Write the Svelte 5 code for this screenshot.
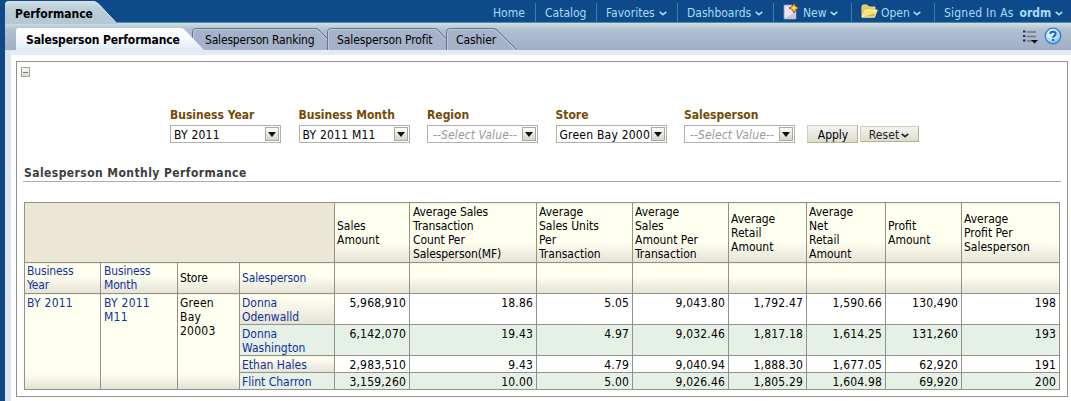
<script lang="ts">
  interface NavItem {
    label: string;
    icon?: "new" | "open";
    user?: string;
    menu?: boolean;
  }

  const navItems: NavItem[] = [
    { label: "Home" },
    { label: "Catalog" },
    { label: "Favorites", menu: true },
    { label: "Dashboards", menu: true },
    { label: "New", icon: "new", menu: true },
    { label: "Open", icon: "open", menu: true },
    { label: "Signed In As", user: "ordm", menu: true },
  ];

  const filters = [
    { label: "Business Year", value: "BY 2011" },
    { label: "Business Month", value: "BY 2011 M11" },
    { label: "Region", value: "" },
    { label: "Store", value: "Green Bay 2000" },
    { label: "Salesperson", value: "" },
  ];

  const measures = [
    ["Sales", "Amount"],
    ["Average Sales", "Transaction", "Count Per", "Salesperson(MF)"],
    ["Average", "Sales Units", "Per", "Transaction"],
    ["Average", "Sales", "Amount Per", "Transaction"],
    ["Average", "Retail", "Amount"],
    ["Average", "Net", "Retail", "Amount"],
    ["Profit", "Amount"],
    ["Average", "Profit Per", "Salesperson"],
  ];

  const rows = [
    {
      name: ["Donna", "Odenwalld"],
      values: ["5,968,910", "18.86", "5.05", "9,043.80", "1,792.47", "1,590.66", "130,490", "198"],
    },
    {
      name: ["Donna", "Washington"],
      values: ["6,142,070", "19.43", "4.97", "9,032.46", "1,817.18", "1,614.25", "131,260", "193"],
    },
    {
      name: ["Ethan Hales"],
      values: ["2,983,510", "9.43", "4.79", "9,040.94", "1,888.30", "1,677.05", "62,920", "191"],
    },
    {
      name: ["Flint Charron"],
      values: ["3,159,260", "10.00", "5.00", "9,026.46", "1,805.29", "1,604.98", "69,920", "200"],
    },
  ];
</script>

{#snippet chevron()}
  <svg class="chevron" width="8" height="5" viewBox="0 0 8 5" fill="none" stroke="currentColor" stroke-width="1.6">
    <path d="M0.7 0.8 L4 3.6 L7.3 0.8" />
  </svg>
{/snippet}

{#snippet lines(parts: string[])}
  {#each parts as part, i}{#if i > 0}<br />{/if}{part}{/each}
{/snippet}

<div class="app">
  <header class="topbar">
    <div class="page-tab">
      <svg class="shape" width="113" height="24" viewBox="0 0 113 24">
        <defs>
          <linearGradient id="page-fill" x1="0" y1="0" x2="0" y2="1">
            <stop offset="0" stop-color="#d2e0e5" />
            <stop offset="0.35" stop-color="#bacfd9" />
            <stop offset="1" stop-color="#b3c7d4" />
          </linearGradient>
        </defs>
        <path d="M0 24 V5 Q0 1 4 1 H88 Q91 1 94 4 L111 22.5 L113 24 Z" fill="url(#page-fill)" />
        <path d="M0.5 5 Q0.5 1.5 4 1.5 H88 Q91 1.5 94 4.5 L111 22.5" fill="none" stroke="#d9e7ec" />
      </svg>
      <span>Performance</span>
    </div>
    <nav>
      {#each navItems as item}
        <a href="#top" class:with-icon={item.icon}>
          {#if item.icon === "new"}
            <svg class="icon" width="17" height="17" viewBox="0 0 17 17">
              <path d="M1 2 H9 L13 6 V16 H1 Z" fill="#e9e6f2" stroke="#8f8cae" stroke-width="0.8" />
              <path d="M1.5 15.5 L12.5 15.5 V9 Z" fill="#cbc6df" />
              <path d="M11 0 L12.6 3.4 L16 5 L12.6 6.6 L11 10 L9.4 6.6 L6 5 L9.4 3.4 Z" fill="#ffbd23" stroke="#94400f" stroke-width="0.9" />
              <path d="M11 2.6 V7.4 M8.6 5 H13.4" stroke="#fff069" />
            </svg>
          {:else if item.icon === "open"}
            <svg class="icon" width="17" height="15" viewBox="0 0 17 15">
              <path d="M1 13 V2 L2 1 H6 L8 3 H14 V6" fill="#e0ca55" stroke="#f1e8a0" stroke-width="0.9" />
              <path d="M1 13.3 L4.5 6 H16.3 L13.5 13.3 Z" fill="#f3e27b" stroke="#fff7c7" stroke-width="0.8" />
              <path d="M3 12.5 L13 12.5 L14 9.5 Z" fill="#d5b740" />
            </svg>
          {/if}
          <span class:signed={item.user}>{item.label}</span>
          {#if item.user}<b>{item.user}</b>{/if}
          {#if item.menu}{@render chevron()}{/if}
        </a>
      {/each}
    </nav>
  </header>

  <div class="tabbar">
    <div class="tab active">
      <svg class="shape" width="190" height="22" viewBox="0 0 190 22">
        <defs>
          <linearGradient id="active-fill" x1="0" y1="0" x2="0" y2="1">
            <stop offset="0" stop-color="#ffffff" />
            <stop offset="0.45" stop-color="#f7fafe" />
            <stop offset="1" stop-color="#e2ebf6" />
          </linearGradient>
        </defs>
        <path d="M0 22 V3 Q0 0 3 0 H164 Q167 0 169 2 L188 22 Z" fill="url(#active-fill)" />
      </svg>
      <span>Salesperson Performance</span>
    </div>
    <div class="tab ranking">
      <svg class="shape" width="136" height="22" viewBox="0 0 136 22">
        <path class="tab-fill" d="M0 22 V3 Q0 0.5 3 0.5 H125 L136 11 V22 Z" />
        <path class="tab-line" d="M0.5 11 V4 Q0.5 0.5 4 0.5 H124 Q126 0.5 127 2 L136 11" />
        <path class="tab-glow" d="M1.5 12 V4 Q1.5 1.5 4 1.5 H124 L135 12" />
      </svg>
      <span>Salesperson Ranking</span>
    </div>
    <div class="tab profit">
      <svg class="shape" width="120" height="22" viewBox="0 0 120 22">
        <path class="tab-fill" d="M0 22 V3 Q0 0.5 3 0.5 H109 L119 11 V22 Z" />
        <path class="tab-line" d="M0.5 22 V4 Q0.5 0.5 4 0.5 H108 Q110 0.5 111 2 L119.5 11" />
        <path class="tab-glow" d="M1.5 22 V4 Q1.5 1.5 4 1.5 H108 L118.5 12" />
      </svg>
      <span>Salesperson Profit</span>
    </div>
    <div class="tab">
      <svg class="shape" width="72" height="22" viewBox="0 0 72 22">
        <path class="tab-fill" d="M0 22 V3 Q0 0.5 3 0.5 H49 L71 22 Z" />
        <path class="tab-line" d="M0.5 22 V4 Q0.5 0.5 4 0.5 H47 Q49 0.5 51 2 L70.5 21.5" />
        <path class="tab-glow" d="M1.5 22 V4 Q1.5 1.5 4 1.5 H48 L69 22" />
      </svg>
      <span>Cashier</span>
    </div>
    <div class="tools">
      <svg width="15" height="14" viewBox="0 0 15 14">
        <path d="M4 2 H13 M4 6.5 H13 M4 11 H9" stroke="#777577" stroke-width="1.5" />
        <path d="M0 1.5 H2.5 M0 6 H2.5 M0 10.5 H2.5" stroke="#2f2b57" stroke-width="2" />
        <path d="M8 10 H15 L11.5 13.5 Z" fill="#000" />
      </svg>
      <svg width="18" height="18" viewBox="0 0 18 18">
        <defs>
          <radialGradient id="help-fill" cx="0.4" cy="0.3" r="0.75">
            <stop offset="0" stop-color="#f2fbff" />
            <stop offset="0.6" stop-color="#b3ddfa" />
            <stop offset="1" stop-color="#62aee9" />
          </radialGradient>
        </defs>
        <circle cx="9" cy="9" r="7.8" fill="url(#help-fill)" stroke="#2f80d0" stroke-width="1.3" />
        <path d="M6.3 7 Q6.3 4.7 9 4.7 Q11.7 4.7 11.7 6.8 Q11.7 8.1 10.2 8.9 Q9.1 9.5 9.1 10.8" fill="none" stroke="#1766bd" stroke-width="2" />
        <rect x="8" y="12" width="2.2" height="2" fill="#1766bd" />
      </svg>
    </div>
  </div>

  <main>
    <section class="panel">
      <button class="collapse" aria-label="Collapse"></button>

      <form class="prompts">
        {#each filters as filter}
          <div class="field">
            <span class="label">{filter.label}</span>
            <div class="select">
              <span class="value" class:empty={!filter.value}>{filter.value || "--Select Value--"}</span>
              <span class="arrow"></span>
            </div>
          </div>
        {/each}
        <button type="button" class="btn apply">Apply</button>
        <button type="button" class="btn reset">Reset {@render chevron()}</button>
      </form>

      <h2>Salesperson Monthly Performance</h2>

      <table>
        <colgroup>
          <col class="c-year" /><col class="c-month" /><col class="c-store" /><col class="c-person" />
          <col class="c-sales" /><col class="c-count" /><col class="c-units" /><col class="c-amount" />
          <col class="c-retail" /><col class="c-net" /><col class="c-profit" /><col class="c-avg" />
        </colgroup>
        <thead>
          <tr class="measures">
            <th class="corner" colspan="4"></th>
            {#each measures as measure}
              <th>{@render lines(measure)}</th>
            {/each}
          </tr>
          <tr class="dimensions">
            <th class="link">Business<br />Year</th>
            <th class="link">Business<br />Month</th>
            <th>Store</th>
            <th class="link">Salesperson</th>
            {#each measures as _}<th></th>{/each}
          </tr>
        </thead>
        <tbody>
          {#each rows as row, i}
            <tr class:tall={row.name.length > 1} class:alt={i % 2 === 1}>
              {#if i === 0}
                <td class="group link" rowspan={rows.length}>BY 2011</td>
                <td class="group link" rowspan={rows.length}>BY 2011<br />M11</td>
                <td class="group" rowspan={rows.length}>Green<br />Bay<br />20003</td>
              {/if}
              <td class="person link">{@render lines(row.name)}</td>
              {#each row.values as value}
                <td class="num">{value}</td>
              {/each}
            </tr>
          {/each}
        </tbody>
      </table>
    </section>
  </main>
</div>

<style>
  :global(body) {
    background: #0e4a89;
    overflow: hidden;
  }

  .app {
    display: flex;
    flex-direction: column;
    box-sizing: border-box;
    height: 401px;
    padding-left: 5px;
    background: #0e4a89;
    font-family: "DejaVu Sans Condensed", "DejaVu Sans", sans-serif;
    font-stretch: condensed;
    font-size: 12px;
    line-height: 14px;
    color: #000;
  }

  .topbar {
    display: flex;
    justify-content: space-between;
    height: 23px;
    background: linear-gradient(#0e4a89 21px, #105a80 22px, #4b8ca5 22px);
  }

  .shape {
    position: absolute;
    top: 0;
    left: 0;
  }

  .page-tab {
    position: relative;
    width: 113px;
    font-weight: bold;
  }

  .page-tab span {
    position: relative;
    display: block;
    padding: 7px 0 0 10px;
  }

  nav {
    display: grid;
    grid-template-columns: 52px 61px 81px 96px 78px 83px 137px;
    height: 20px;
    margin-top: 3px;
  }

  nav a {
    display: flex;
    align-items: center;
    gap: 4px;
    height: 19px;
    padding-left: 9px;
    border-left: 1px solid #3e80a5;
    color: #a9dcf7;
    text-decoration: none;
    white-space: nowrap;
  }

  nav a:first-child {
    border-left-color: transparent;
  }

  nav b {
    margin-left: 2px;
  }

  .signed {
    letter-spacing: 0.22px;
  }

  .icon {
    margin-top: -2px;
  }

  .with-icon {
    gap: 3px;
  }

  .chevron {
    flex: none;
    margin-top: 2px;
  }

  .tabbar {
    display: flex;
    height: 22px;
    padding: 5px 0 0 11px;
    background: linear-gradient(#d2dfe6 0, #bccbd8 4px, #afbfd0 7px, #a2afc5 26px, #99a8bd 27px);
  }

  .tab {
    position: relative;
    width: 120px;
  }

  .tab span {
    position: relative;
    display: block;
    padding: 5px 0 0 10px;
    white-space: nowrap;
    letter-spacing: -0.1px;
  }

  .active {
    z-index: 1;
    width: 176px;
    font-weight: bold;
  }

  .ranking {
    width: 135px;
  }

  .ranking span {
    padding-left: 13px;
    letter-spacing: -0.18px;
  }

  .profit {
    width: 119px;
  }

  .tab-fill {
    fill: #a5b2c8;
  }

  .tab-line {
    fill: none;
    stroke: #66758f;
  }

  .tab-glow {
    fill: none;
    stroke: #becadb;
  }

  .tools {
    display: flex;
    gap: 6px;
    margin: -1px 9px 0 auto;
  }

  .tools svg:first-child {
    margin-top: 3px;
  }

  main {
    flex: 1;
    padding: 5px 0 0 6px;
    background: linear-gradient(90deg, #dce7f4 6px, transparent 6px), linear-gradient(#e3ebf6 5px, #fff 5px);
  }

  .panel {
    box-sizing: border-box;
    width: 1052px;
    height: 336px;
    margin: 6px 0 0 5px;
    padding: 5px 7px 0 4px;
    border: 1px solid #949288;
    background: #fff;
  }

  .collapse {
    display: block;
    width: 9px;
    height: 10px;
    padding: 0;
    border: 1px solid #a5a595;
    background: linear-gradient(#777c6d, #777c6d) center / 5px 1px no-repeat, linear-gradient(#fafaf5, #dcdcce);
    box-sizing: border-box;
  }

  .prompts {
    display: flex;
    align-items: flex-end;
    height: 66px;
    margin-left: 149px;
  }

  .field {
    width: 128.5px;
  }

  .label {
    display: block;
    margin-bottom: 3px;
    font-weight: bold;
    color: #734b06;
  }

  .select {
    display: flex;
    align-items: center;
    box-sizing: border-box;
    width: 111px;
    height: 18px;
    padding: 0 0 0 3px;
    border: 1px solid #b2b0a7;
  }

  .value {
    flex: 1;
    padding-top: 2px;
    white-space: nowrap;
    letter-spacing: 0.22px;
  }

  .empty {
    padding-left: 2px;
    font-style: italic;
    letter-spacing: 0.12px;
    color: #999;
  }

  .arrow {
    display: flex;
    flex: none;
    align-items: center;
    justify-content: center;
    box-sizing: border-box;
    width: 14px;
    height: 14px;
    margin-right: 1px;
    border: 1px solid #a9a997;
    background: linear-gradient(#fdfdfc, #d5d5ca);
  }

  .arrow::after {
    content: "";
    border: 4px solid transparent;
    border-top: 5px solid #111;
    border-bottom: 0;
  }

  .btn {
    display: flex;
    align-items: center;
    justify-content: center;
    box-sizing: border-box;
    height: 18px;
    padding: 1px 0 0;
    border: 1px solid #b5b486;
    border-top-color: #cfcfbf;
    border-left-color: #cfcfbf;
    background: linear-gradient(#f4f4ef, #dcdcd1);
    font: inherit;
    color: #000;
  }

  .apply {
    width: 51px;
    margin: 0 2px 0 -6px;
    padding-left: 2px;
  }

  .reset {
    gap: 2px;
    width: 59px;
    height: 16px;
    margin-bottom: 1px;
    letter-spacing: 0.1px;
    color: #222;
  }

  h2 {
    margin: 23px -1px 20px 2px;
    padding: 0 0 1px 1px;
    border-bottom: 1px solid #aba9b6;
    font-size: 12px;
    line-height: 14px;
    letter-spacing: 0.43px;
    color: #3d3d3d;
  }

  table {
    width: 1036px;
    margin-left: 3px;
    border-collapse: collapse;
    table-layout: fixed;
  }

  .c-year { width: 76px; }
  .c-month { width: 77px; }
  .c-store { width: 62px; }
  .c-person { width: 95px; }
  .c-sales { width: 75px; }
  .c-count { width: 127px; }
  .c-units { width: 96px; }
  .c-amount { width: 96px; }
  .c-retail { width: 78px; }
  .c-net { width: 79px; }
  .c-profit { width: 76px; }
  .c-avg { width: 98px; }

  th,
  td {
    padding: 0 2px;
    border: 1px solid #949288;
    text-align: left;
    font-weight: normal;
    white-space: nowrap;
  }

  th {
    background: linear-gradient(#fffff0 40%, #e5e2d6);
  }

  .dimensions th {
    letter-spacing: -0.15px;
  }

  th:nth-child(2),
  td:nth-child(2).group {
    padding-left: 3px;
  }

  .measures {
    height: 60px;
  }

  .measures th:nth-child(2) {
    padding-left: 2px;
  }

  .measures th:nth-child(3) {
    padding-left: 3px;
    letter-spacing: -0.1px;
  }

  .measures th {
    background: linear-gradient(#fffff0 65%, #e5e2d6);
  }

  .measures th.corner {
    background: #eae8d5;
  }

  .dimensions,
  .tall {
    height: 31px;
  }

  tbody tr {
    height: 17px;
  }

  tbody tr.tall {
    height: 31px;
  }

  td {
    vertical-align: top;
    padding-top: 2px;
  }

  .group {
    background: linear-gradient(#fffff0 82%, #e5e2d6);
    letter-spacing: 0.25px;
  }

  .person {
    background: linear-gradient(#fffff0 10%, #e5e2d6);
  }

  .alt td {
    background: #e5f1e6;
  }

  .link {
    color: #10309c;
  }

  .num {
    padding-right: 3px;
    text-align: right;
    letter-spacing: 0.18px;
  }
</style>
